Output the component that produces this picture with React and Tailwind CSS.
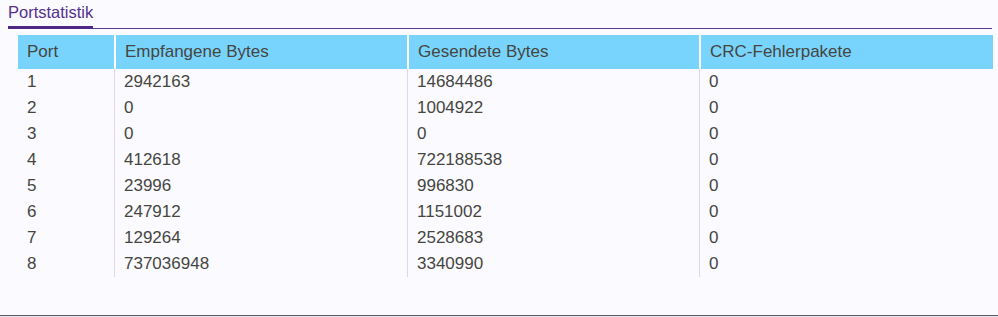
import React from "react";

const rows = [
  [1, 2942163, 14684486, 0],
  [2, 0, 1004922, 0],
  [3, 0, 0, 0],
  [4, 412618, 722188538, 0],
  [5, 23996, 996830, 0],
  [6, 247912, 1151002, 0],
  [7, 129264, 2528683, 0],
  [8, 737036948, 3340990, 0],
];

const headers = ["Port", "Empfangene Bytes", "Gesendete Bytes", "CRC-Fehlerpakete"];

export default function App() {
  return (
    <div
      className="w-[998px] h-[317px] bg-[#fafaff] flex flex-col"
      style={{ fontFamily: '"Liberation Sans", Arial, sans-serif' }}
    >
      {/* section title with tab-style underline */}
      <div className="ml-[8px] mr-[6px] border-b border-[#5a3b94] flex">
        <span className="pt-[3px] pb-[5px] -mb-px text-[16.5px] leading-[18px] text-[#56318a] border-b-[3px] border-[#4f2886]">
          Portstatistik
        </span>
      </div>

      <div className="mt-[6px] ml-[18px] w-[975px] grid grid-cols-[96px_293px_292px_294px] text-[17px] text-[#46463f]">
        {headers.map((h, i) => (
          <div
            key={h}
            className={
              "h-[34px] flex items-center bg-[#78d4fd] " +
              (i === 0 ? "pl-[9px]" : "pl-[9px] border-l-2 border-white")
            }
          >
            {h}
          </div>
        ))}
        {rows.map((r) =>
          r.map((v, i) => (
            <div
              key={r[0] + "-" + i}
              className={
                "h-[26px] leading-[26px] " +
                (i === 0 ? "pl-[9px]" : "pl-[9px] border-l border-[#dcd6f2]")
              }
            >
              {v}
            </div>
          ))
        )}
      </div>

      <div className="flex-1" />
      <div className="h-[2px] border-t border-[#5c5c66] bg-[#e4e2f0]" />
    </div>
  );
}
